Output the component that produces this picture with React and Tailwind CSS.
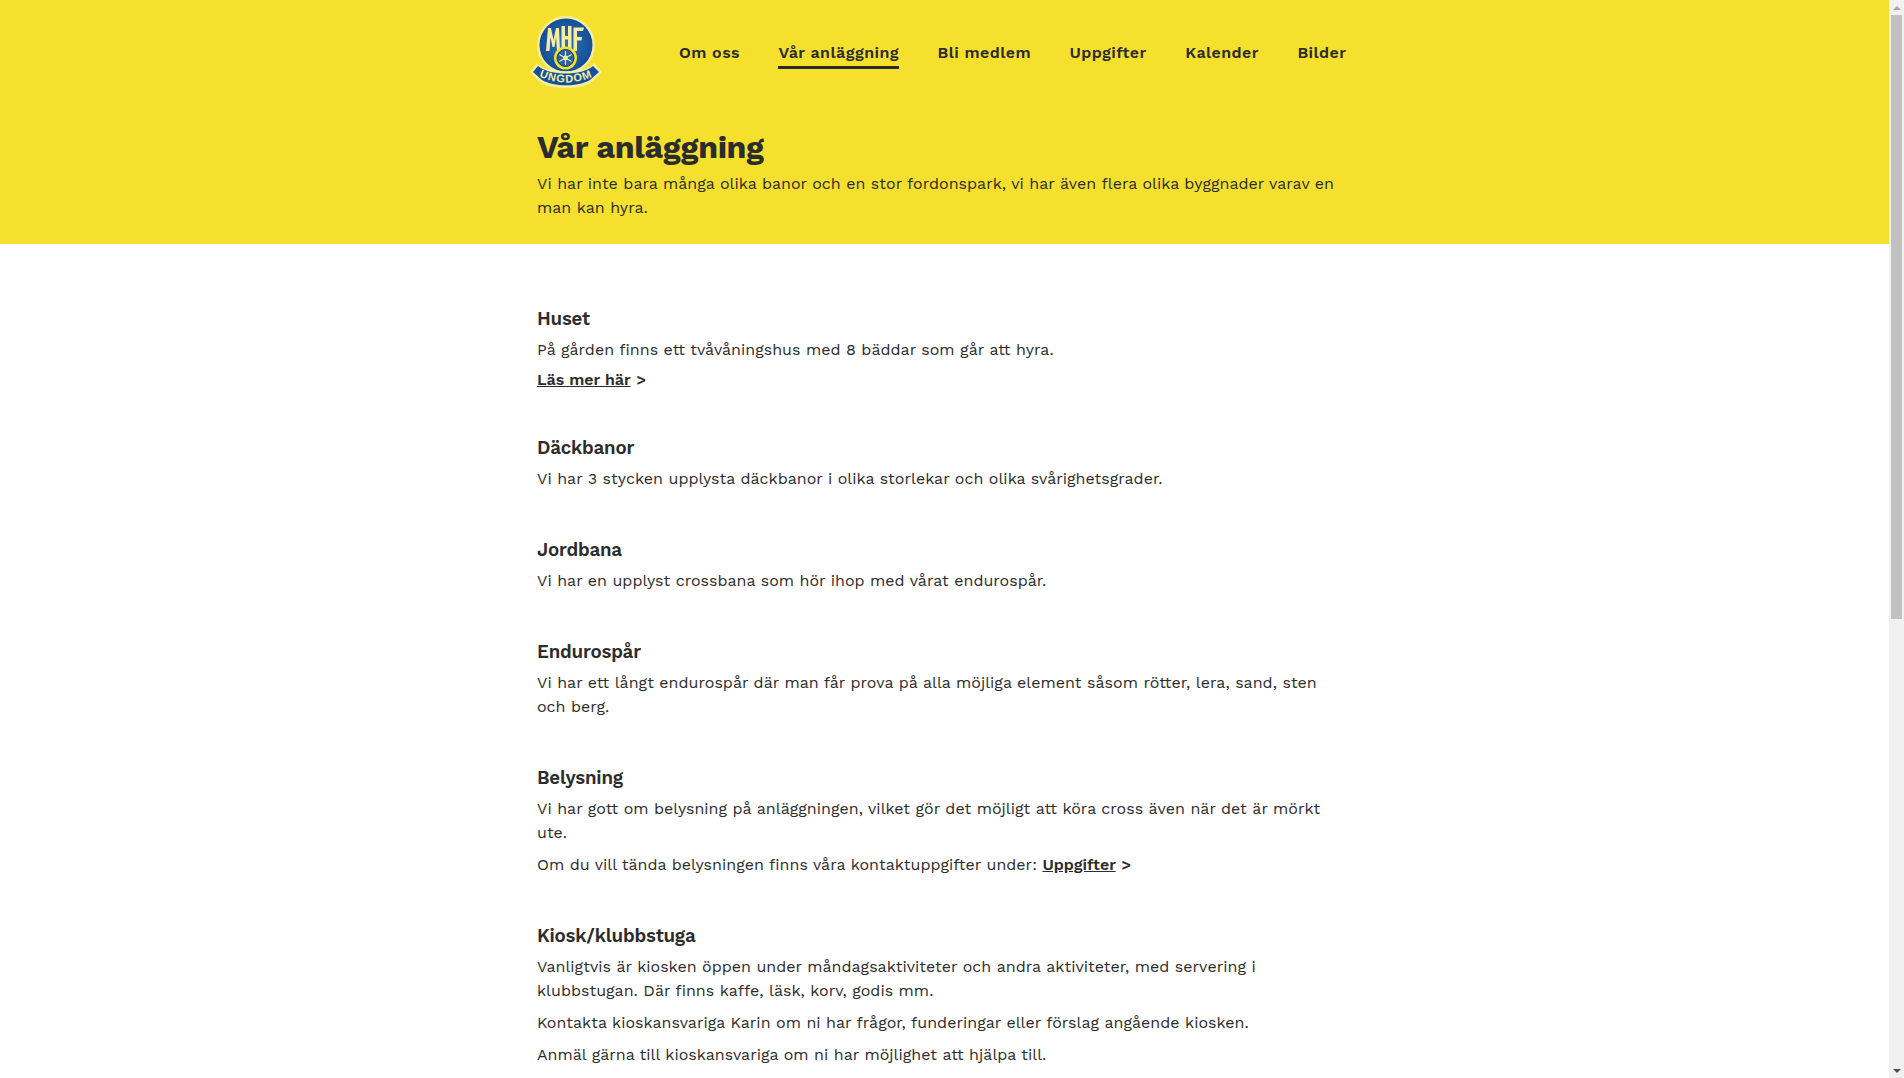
import React from 'react';

const font = { fontFamily: '"Work Sans", Inter, sans-serif' };

const navItems = ['Om oss', 'Vår anläggning', 'Bli medlem', 'Uppgifter', 'Kalender', 'Bilder'];

const Logo = () => (
  <svg viewBox="0 0 72 74" className="w-[72px] h-[74px] block">
    <defs>
      <radialGradient id="blue" cx="50%" cy="50%" r="55%">
        <stop offset="0%" stopColor="#2f74b8" />
        <stop offset="100%" stopColor="#124a96" />
      </radialGradient>
    </defs>
    <circle cx="36" cy="30" r="29" fill="#f6eda0" />
    <circle cx="36" cy="30" r="26.5" fill="url(#blue)" />
    {/* MHF */}
    <path d="M16 36 L18 13 H21 L23.5 25 L26 13 H29 L30 36 H27 L26 22 L24.5 32 H22.5 L20.5 22 L19.5 36 Z" fill="#f6eda0" />
    <path d="M31.5 11 H35 V21 H38 V11 H41.5 V34 H38 V24.5 H35 V34 H31.5 Z" fill="#f6eda0" />
    <path d="M43.5 36 V12.5 H54 L53 16 H47 V22 H52 L51.5 25.5 H47 V36 Z" fill="#f6eda0" />
    {/* wheel */}
    <circle cx="35.5" cy="43" r="11.5" fill="#f5e02c" />
    <circle cx="35.5" cy="43" r="8.5" fill="#2a63a8" stroke="#0f3d7e" strokeWidth="1" />
    <circle cx="35.5" cy="43" r="2.4" fill="#f6eda0" />
    <g stroke="#f6eda0" strokeWidth="1.2">
      <path d="M35.5 36 V50" />
      <path d="M29.4 39.5 L41.6 46.5" />
      <path d="M29.4 46.5 L41.6 39.5" />
    </g>
    {/* banner */}
    <path d="M0 57 L7 48 C 18 59 54 59 64 48 L72 57 L62 67 C 50 75 22 75 10 67 Z" fill="#f6eda0" />
    <path d="M3 57 L8 51 C 20 61 52 61 63 51 L69 57 L60 65 C 48 72 24 72 12 65 Z" fill="#14509c" />
    <path id="ung" d="M4 59 Q36 76 68 59" fill="none" />
    <text fontFamily="Liberation Sans, sans-serif" fontWeight="700" fontSize="11" fill="#f6eda0" letterSpacing="0.9">
      <textPath href="#ung" startOffset="50%" textAnchor="middle">UNGDOM</textPath>
    </text>
  </svg>
);

const Link = ({ children }) => (
  <span className="font-semibold">
    <a className="underline">{children}</a> <span className="ml-px">&gt;</span>
  </span>
);

const Section = ({ title, children }) => (
  <section className="mb-[46px]">
    <h2 className="text-[18.72px] leading-[26px] font-semibold mb-[6px] tracking-[-0.2px]">{title}</h2>
    {children}
  </section>
);

const P = ({ children }) => <p className="text-[16px] leading-6 mb-2 tracking-[0.02px]">{children}</p>;

export default function App() {
  return (
    <div className="flex h-screen overflow-hidden bg-white text-[#2c2c2c]" style={font}>
      <main className="flex-1 min-w-0 overflow-hidden">
        <header className="bg-[#f5e12d] h-[244px]">
          <div className="w-[815px] mx-auto">
            <nav className="flex items-start h-[126px]">
              <div className="-ml-[7px] mr-[77px] mt-[15px]"><Logo /></div>
              <ul className="flex gap-[38.5px] text-[16px] font-semibold tracking-[0.43px] mt-[41px]">
                {navItems.map((n) => (
                  <li key={n} className={n === 'Vår anläggning' ? 'border-b-[3px] border-[#2c2c2c] leading-6 pb-px' : 'border-b-[3px] border-transparent leading-6 pb-px'}>{n}</li>
                ))}
              </ul>
            </nav>
            <h1 className="text-[32px] leading-[42px] font-bold tracking-[-0.35px] mb-1">Vår anläggning</h1>
            <p className="text-[16px] leading-6 tracking-[0.02px] pr-[15px]">Vi har inte bara många olika banor och en stor fordonspark, vi har även flera olika byggnader varav en man kan hyra.</p>
          </div>
        </header>
        <div className="w-[815px] mx-auto pt-[62px] pr-[15px]">
          <Section title="Huset">
            <P>På gården finns ett tvåvåningshus med 8 bäddar som går att hyra.</P>
            <p className="text-[16px] leading-[19px] mb-2"><Link>Läs mer här</Link></p>
          </Section>
          <Section title="Däckbanor">
            <P>Vi har 3 stycken upplysta däckbanor i olika storlekar och olika svårighetsgrader.</P>
          </Section>
          <Section title="Jordbana">
            <P>Vi har en upplyst crossbana som hör ihop med vårat endurospår.</P>
          </Section>
          <Section title="Endurospår">
            <P>Vi har ett långt endurospår där man får prova på alla möjliga element såsom rötter, lera, sand, sten och berg.</P>
          </Section>
          <Section title="Belysning">
            <P>Vi har gott om belysning på anläggningen, vilket gör det möjligt att köra cross även när det är mörkt ute.</P>
            <P>Om du vill tända belysningen finns våra kontaktuppgifter under: <Link>Uppgifter</Link></P>
          </Section>
          <Section title="Kiosk/klubbstuga">
            <P>Vanligtvis är kiosken öppen under måndagsaktiviteter och andra aktiviteter, med servering i klubbstugan. Där finns kaffe, läsk, korv, godis mm.</P>
            <P>Kontakta kioskansvariga Karin om ni har frågor, funderingar eller förslag angående kiosken.</P>
            <P>Anmäl gärna till kioskansvariga om ni har möjlighet att hjälpa till.</P>
          </Section>
        </div>
      </main>
      <div className="w-[15px] shrink-0 bg-[#f1f1f1] flex flex-col items-center">
        <div className="h-[15px] flex items-center justify-center">
          <div className="w-0 h-0 border-x-[4px] border-x-transparent border-b-[4px] border-b-[#a3a3a3]" />
        </div>
        <div className="w-[11px] h-[604px] bg-[#c1c1c1]" />
        <div className="mt-auto h-[15px] flex items-center justify-center">
          <div className="w-0 h-0 border-x-[4px] border-x-transparent border-t-[4px] border-t-[#505050]" />
        </div>
      </div>
    </div>
  );
}
